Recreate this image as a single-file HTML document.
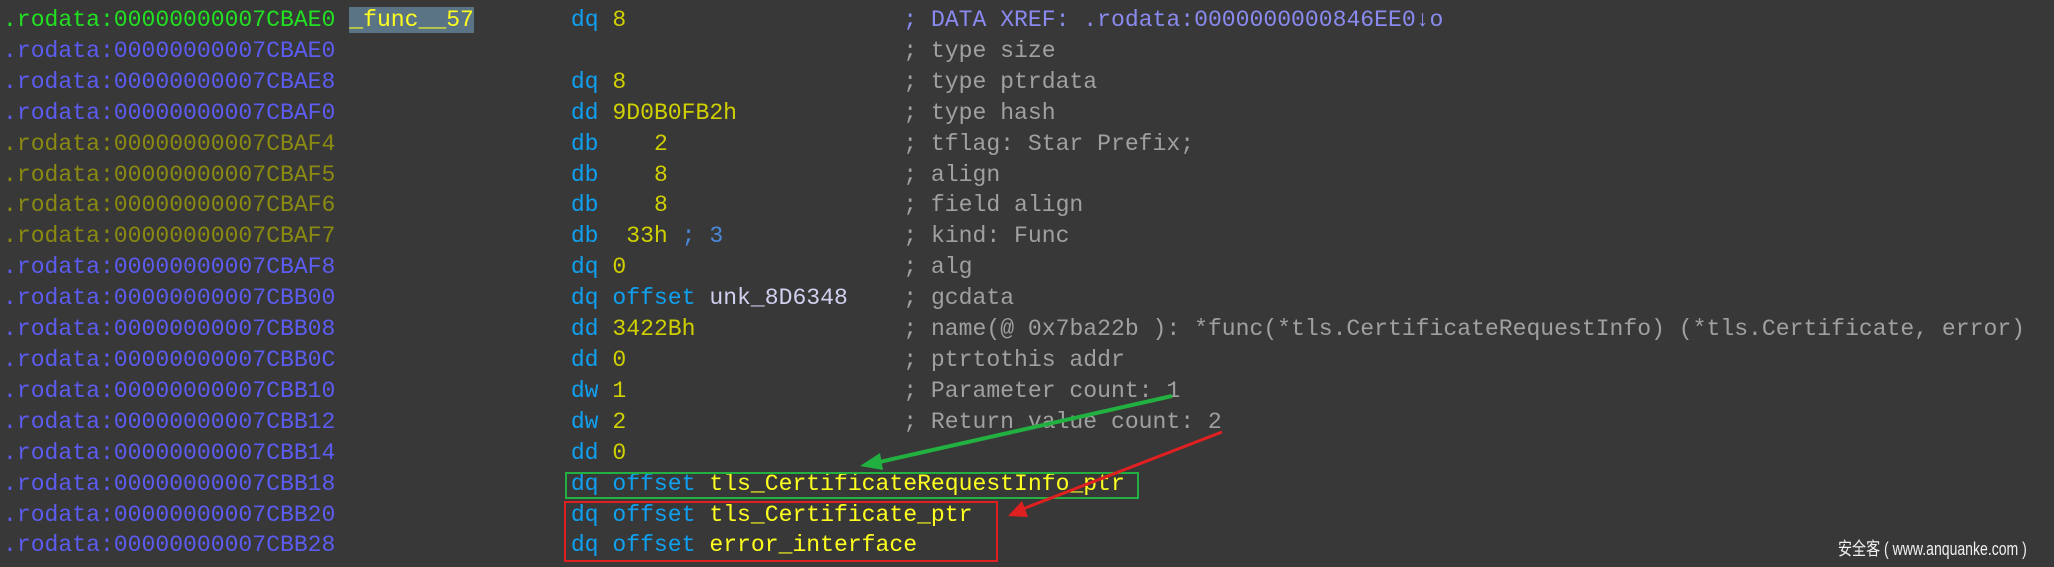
<!DOCTYPE html>
<html><head><meta charset="utf-8"><style>
html,body{margin:0;padding:0;background:#383838;width:2054px;height:567px;overflow:hidden;position:relative}
pre{position:absolute;left:3px;top:5px;margin:0;font-family:"Liberation Mono",monospace;font-size:23.08px;line-height:30.9px;color:#a8a8a8;white-space:pre}
.a{color:#5c5cf0}.g{color:#22e022}.o{color:#8a8a12}.k{color:#10a0f0}.n{color:#d0d000}.y{color:#ffff20}.c{color:#a0a0a0}.x{color:#8a8af0}.b{color:#4a88d8}.u{color:#d0d0f0}
.h{background:#5a7485}
.wm{position:absolute;left:1838px;top:535px;font-family:"Liberation Sans","Noto Sans CJK SC",sans-serif;font-size:18px;color:#f0f0f0;white-space:nowrap;transform:scaleX(0.78);transform-origin:0 0}
</style></head><body>
<pre><span class="g">.rodata:00000000007CBAE0</span> <span class="h y">_func__57</span>       <span class="k">dq</span> <span class="n">8</span>                    <span class="x">; DATA XREF: .rodata:0000000000846EE0↓o</span>
<span class="a">.rodata:00000000007CBAE0</span>                                         <span class="c">; type size</span>
<span class="a">.rodata:00000000007CBAE8</span>                 <span class="k">dq</span> <span class="n">8</span>                    <span class="c">; type ptrdata</span>
<span class="a">.rodata:00000000007CBAF0</span>                 <span class="k">dd</span> <span class="n">9D0B0FB2h</span>            <span class="c">; type hash</span>
<span class="o">.rodata:00000000007CBAF4</span>                 <span class="k">db</span>    <span class="n">2</span>                 <span class="c">; tflag: Star Prefix;</span>
<span class="o">.rodata:00000000007CBAF5</span>                 <span class="k">db</span>    <span class="n">8</span>                 <span class="c">; align</span>
<span class="o">.rodata:00000000007CBAF6</span>                 <span class="k">db</span>    <span class="n">8</span>                 <span class="c">; field align</span>
<span class="o">.rodata:00000000007CBAF7</span>                 <span class="k">db</span>  <span class="n">33h</span> <span class="b">; 3</span>             <span class="c">; kind: Func</span>
<span class="a">.rodata:00000000007CBAF8</span>                 <span class="k">dq</span> <span class="n">0</span>                    <span class="c">; alg</span>
<span class="a">.rodata:00000000007CBB00</span>                 <span class="k">dq offset</span> <span class="u">unk_8D6348</span>    <span class="c">; gcdata</span>
<span class="a">.rodata:00000000007CBB08</span>                 <span class="k">dd</span> <span class="n">3422Bh</span>               <span class="c">; name(@ 0x7ba22b ): *func(*tls.CertificateRequestInfo) (*tls.Certificate, error)</span>
<span class="a">.rodata:00000000007CBB0C</span>                 <span class="k">dd</span> <span class="n">0</span>                    <span class="c">; ptrtothis addr</span>
<span class="a">.rodata:00000000007CBB10</span>                 <span class="k">dw</span> <span class="n">1</span>                    <span class="c">; Parameter count: 1</span>
<span class="a">.rodata:00000000007CBB12</span>                 <span class="k">dw</span> <span class="n">2</span>                    <span class="c">; Return value count: 2</span>
<span class="a">.rodata:00000000007CBB14</span>                 <span class="k">dd</span> <span class="n">0</span>
<span class="a">.rodata:00000000007CBB18</span>                 <span class="k">dq offset</span> <span class="y">tls_CertificateRequestInfo_ptr</span>
<span class="a">.rodata:00000000007CBB20</span>                 <span class="k">dq offset</span> <span class="y">tls_Certificate_ptr</span>
<span class="a">.rodata:00000000007CBB28</span>                 <span class="k">dq offset</span> <span class="y">error_interface</span></pre>
<svg width="2054" height="567" style="position:absolute;left:0;top:0">
<rect x="566" y="473" width="572" height="25" fill="none" stroke="#22b040" stroke-width="2"/>
<rect x="565" y="502" width="432" height="59" fill="none" stroke="#e02020" stroke-width="2"/>
<line x1="1172" y1="396" x2="875" y2="463" stroke="#22b040" stroke-width="4"/>
<polygon points="860,466 880,453 883,470" fill="#22b040"/>
<line x1="1222" y1="432" x2="1020" y2="510" stroke="#e02020" stroke-width="3"/>
<polygon points="1008,516 1022,501 1028,517" fill="#e02020"/>
</svg>
<div class="wm">安全客 ( www.anquanke.com )</div>
</body></html>
